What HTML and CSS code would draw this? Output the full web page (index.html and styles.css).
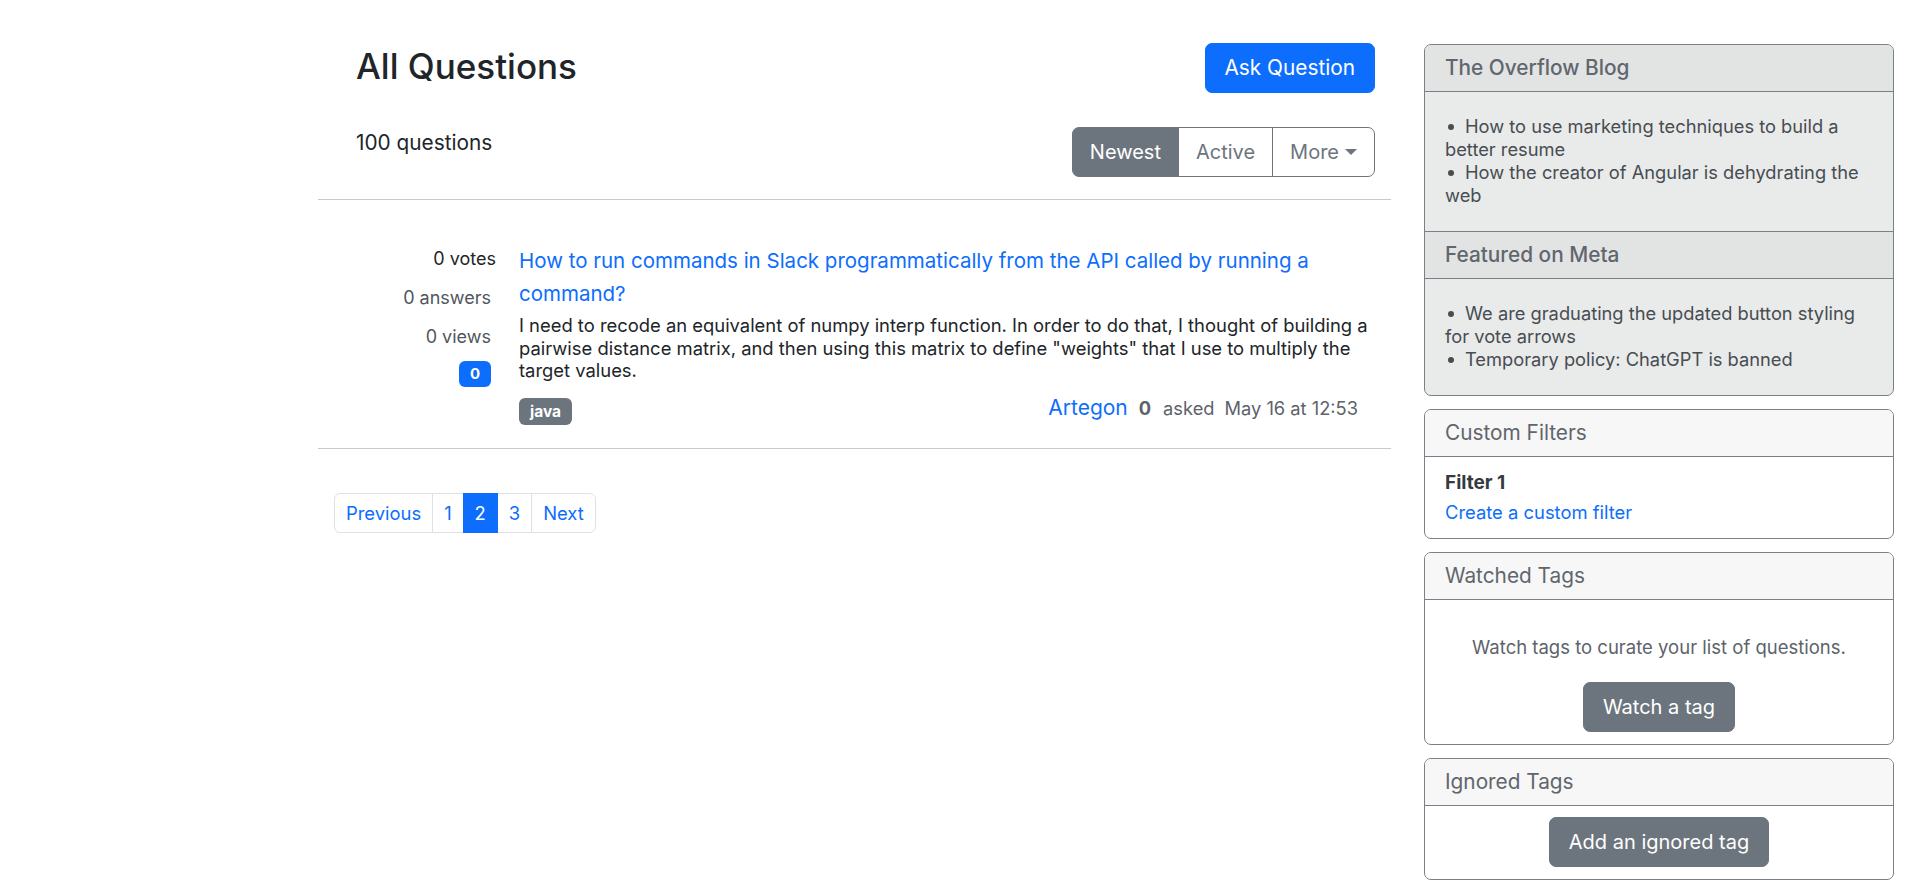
FILE: index.html
```html
<!DOCTYPE html>
<html lang="en">
<head>
<meta charset="utf-8">
<title>All Questions</title>
<link rel="stylesheet" href="styles.css">
</head>
<body>
<div class="page">
  <main class="main">
    <div class="head">
      <div class="head-top">
        <h1 class="page-title">All Questions</h1>
        <button class="btn btn-primary" type="button">Ask Question</button>
      </div>
      <div class="head-bottom">
        <div class="count">100 questions</div>
        <div class="sort">
          <button class="sort-btn active" type="button">Newest</button>
          <button class="sort-btn" type="button">Active</button>
          <button class="sort-btn more" type="button">More</button>
        </div>
      </div>
    </div>
    <hr class="divider">
    <div class="question">
      <div class="stats">
        <div class="stat stat-first">0 votes</div>
        <div class="stat">0 answers</div>
        <div class="stat">0 views</div>
        <div class="badge-count">0</div>
      </div>
      <div class="q-body">
        <a class="q-title" href="#">How to run commands in Slack programmatically from the API called by running a command?</a>
        <p class="excerpt">I need to recode an equivalent of numpy interp function. In order to do that, I thought of building a pairwise distance matrix, and then using this matrix to define "weights" that I use to multiply the target values.</p>
        <div class="q-foot">
          <span class="tag">java</span>
          <div class="author">
            <a class="author-name" href="#">Artegon</a>
            <span class="rep">0</span>
            <span class="asked">asked</span>
            <span class="date">May 16 at 12:53</span>
          </div>
        </div>
      </div>
    </div>
    <hr class="divider">
    <nav class="pagination">
      <a class="page-link first" href="#">Previous</a>
      <a class="page-link" href="#">1</a>
      <a class="page-link current" href="#">2</a>
      <a class="page-link" href="#">3</a>
      <a class="page-link last" href="#">Next</a>
    </nav>
  </main>
  <aside class="sidebar">
    <section class="card card-muted">
      <div class="card-header">The Overflow Blog</div>
      <div class="list-body">
        <ul class="side-list">
          <li>How to use marketing techniques to build a better resume</li>
          <li>How the creator of Angular is dehydrating the web</li>
        </ul>
      </div>
      <div class="card-header header-split">Featured on Meta</div>
      <div class="list-body">
        <ul class="side-list">
          <li>We are graduating the updated button styling for vote arrows</li>
          <li>Temporary policy: ChatGPT is banned</li>
        </ul>
      </div>
    </section>
    <section class="card">
      <div class="card-header">Custom Filters</div>
      <div class="filter-body">
        <div class="filter-name">Filter 1</div>
        <a class="filter-link" href="#">Create a custom filter</a>
      </div>
    </section>
    <section class="card">
      <div class="card-header">Watched Tags</div>
      <div class="watch-body">
        <p class="watch-text">Watch tags to curate your list of questions.</p>
        <button class="btn btn-secondary" type="button">Watch a tag</button>
      </div>
    </section>
    <section class="card">
      <div class="card-header">Ignored Tags</div>
      <div class="ignore-body">
        <button class="btn btn-secondary" type="button">Add an ignored tag</button>
      </div>
    </section>
  </aside>
</div>
</body>
</html>
```

FILE: styles.css
```css
* { box-sizing: border-box; }

body {
  margin: 0;
  background: #fff;
  color: #212529;
  font-family: Inter, "Noto Sans", sans-serif;
}

a { text-decoration: none; }

.page {
  display: grid;
  grid-template-columns: 1073px 470px;
  column-gap: 33px;
  padding-left: 318px;
  align-items: start;
}

/* header */
.head { padding: 43px 16px 22px 38px; }

.head-top,
.head-bottom {
  display: flex;
  justify-content: space-between;
  align-items: flex-start;
}

.head-bottom { margin-top: 34px; }

.page-title {
  margin: 2px 0 0;
  font-size: 35px;
  line-height: 42px;
  font-weight: 500;
  color: #212529;
}

.btn {
  font-family: inherit;
  font-size: 20px;
  line-height: 30px;
  padding: 9px 19px;
  border: 1px solid transparent;
  border-radius: 7px;
  cursor: pointer;
}

.btn-primary { background: #0d6efd; border-color: #0d6efd; color: #fff; font-size: 20.8px; }
.btn-secondary { background: #6c757d; border-color: #6c757d; color: #fff; }

.count {
  font-size: 20.8px;
  line-height: 30px;
  margin-top: 1px;
}

.sort { display: flex; }

.sort-btn {
  font-family: inherit;
  font-size: 20px;
  line-height: 30px;
  padding: 9px 17px;
  background: #fff;
  color: #6c757d;
  border: 1px solid #6c757d;
  margin-left: -1px;
}

.sort-btn:first-child { border-radius: 7px 0 0 7px; margin-left: 0; }
.sort-btn:last-child { border-radius: 0 7px 7px 0; }
.sort-btn.active { background: #6c757d; color: #fff; }

.sort-btn.more::after {
  content: "";
  display: inline-block;
  margin-left: 6px;
  vertical-align: 4px;
  border-top: 6px solid currentColor;
  border-left: 6px solid transparent;
  border-right: 6px solid transparent;
}

.divider {
  border: 0;
  border-top: 1px solid #c9c9c9;
  margin: 0;
}

/* question */
.question {
  display: grid;
  grid-template-columns: 178px 1fr;
  column-gap: 23px;
  padding: 45px 16px 23px 0;
}

.stats {
  display: flex;
  flex-direction: column;
  align-items: flex-end;
  gap: 13px;
  padding-top: 1px;
  font-size: 18px;
  line-height: 26px;
  color: #50565c;
}

.stat { margin-right: 5px; }
.stat-first { margin-right: 0; color: #212529; }

.badge-count {
  width: 32px;
  margin-top: -2px;
  margin-right: 5px;
  background: #0d6efd;
  color: #fff;
  font-weight: 700;
  font-size: 15px;
  line-height: 26px;
  text-align: center;
  border-radius: 6px;
}

.q-title {
  display: block;
  color: #0d6efd;
  font-size: 20.5px;
  line-height: 33px;
  margin-top: -1px;
}

.excerpt {
  margin: 4px 0 0;
  font-size: 18.4px;
  line-height: 22.5px;
}

.q-foot {
  display: flex;
  justify-content: space-between;
  align-items: flex-start;
  margin-top: 14px;
}

.tag {
  margin-top: 2px;
  padding: 0 11px;
  background: #6c757d;
  color: #fff;
  font-weight: 700;
  font-size: 15.5px;
  line-height: 27px;
  border-radius: 6px;
}

.author {
  display: flex;
  align-items: baseline;
  margin-right: 17px;
  font-size: 18.3px;
  line-height: 24px;
  color: #5c636a;
}

.author-name { font-size: 21px; color: #0d6efd; }
.rep { margin-left: 11px; font-weight: 700; }
.asked { margin-left: 12px; }
.date { margin-left: 10px; }

/* pagination */
.pagination {
  display: flex;
  margin: 44px 0 0 16px;
}

.page-link {
  font-size: 18.4px;
  line-height: 26px;
  padding: 6px 11px;
  border: 1px solid #dee2e6;
  color: #0d6efd;
  margin-left: -1px;
  background: #fff;
}

.page-link.first { margin-left: 0; border-radius: 6px 0 0 6px; }
.page-link.last { border-radius: 0 6px 6px 0; }
.page-link.current { background: #0d6efd; border-color: #0d6efd; color: #fff; position: relative; }

/* sidebar */
.sidebar {
  display: flex;
  flex-direction: column;
  gap: 13px;
  padding-top: 44px;
}

.card {
  border: 1px solid #7a8087;
  border-radius: 7px;
  overflow: hidden;
  background: #fff;
}

.card-header {
  padding: 8px 20px;
  font-size: 20.8px;
  line-height: 30px;
  background: #f7f7f7;
  color: #5f666d;
  border-bottom: 1px solid #7a8087;
}

.card-muted { background: #e9eaea; }
.card-muted .card-header { background: #e2e3e3; font-weight: 500; }
.header-split { border-top: 1px solid #7a8087; }

.list-body {
  padding: 23px 20px 24px;
  font-size: 18.3px;
  line-height: 23px;
  color: #474d52;
}

.side-list {
  list-style: none;
  margin: 0;
  padding: 0;
}

.side-list li::before {
  content: "";
  display: inline-block;
  width: 6px;
  height: 6px;
  margin: 0 11px 0 3px;
  border-radius: 50%;
  background: currentColor;
  vertical-align: 3px;
}

.filter-body {
  padding: 13px 20px 13px;
  font-size: 18.4px;
  line-height: 26px;
}

.filter-name { font-weight: 700; font-size: 19px; color: #343a40; }
.filter-link { display: block; margin-top: 3px; color: #0d6efd; }

.watch-body {
  padding: 34px 20px 12px;
  text-align: center;
}

.watch-text {
  margin: 0 0 22px;
  font-size: 18.5px;
  line-height: 26px;
  color: #5c636a;
}

.ignore-body {
  padding: 11px 20px 12px;
  text-align: center;
}
```
